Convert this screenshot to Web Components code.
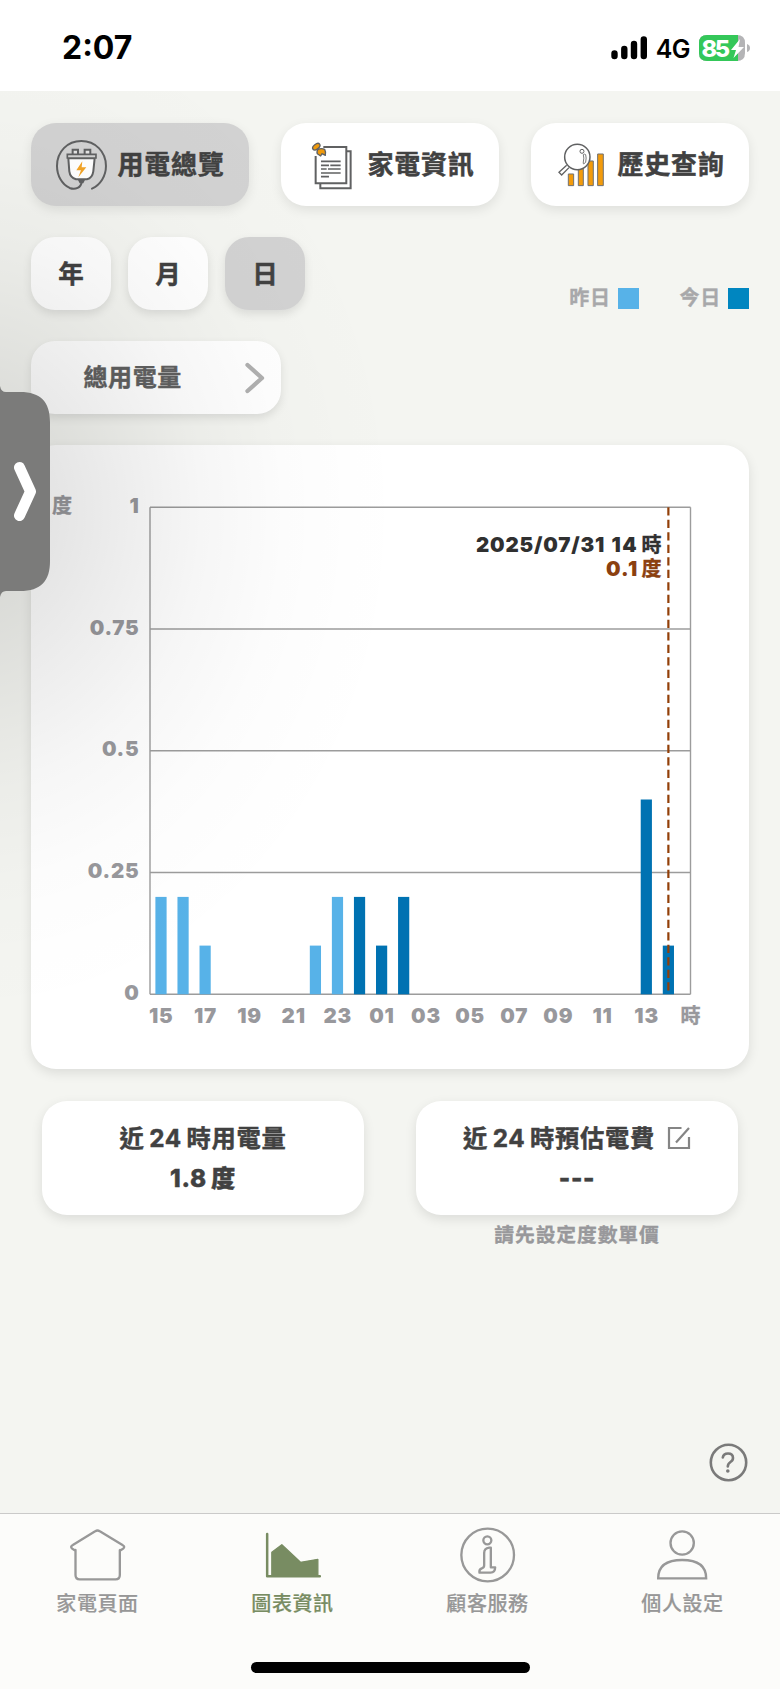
<!DOCTYPE html>
<html lang="zh-Hant">
<head>
<meta charset="utf-8">
<title>圖表資訊</title>
<style>
    html {
        background: #f4f5f1;
    }

    body {
        margin: 0;
        width: 780px;
        height: 1689px;
        overflow: hidden;
        font-family: Inter, "Noto Sans CJK TC", sans-serif;
        font-weight: 700;
        color: #414141;
    }
</style>
</head>
<body>
<energy-app></energy-app>

<script>
const ICONS = {
    plug: `<g fill="none" stroke="#606162" stroke-width="6">
        <path d="M216 235C241 224 258 197 258 167C258 124 226 92 184 92S111 124 111 167C111 196 126 222 149 233C166 240 184 232 185 214" stroke-linecap="round"/>
        <path d="M158 132V118H174V132M194 132V118H211V132" stroke-width="6" fill="#e4e4e4"/>
        <path d="M145 144H224L220 183Q217 203 201 207H168Q150 201 148 183Z" fill="#fff"/>
        <path d="M142 132H228V143H142Z" fill="#d2d2d2" stroke-width="5"/>
        </g><path d="M173 207H196L190 219H179Z" fill="#606162"/>
        <path d="M187 153L169 180H183L175 201L199 171H185Z" fill="#f3a427"/>`,
    paper: `<g fill="none" stroke="#606162" stroke-width="6">
        <path d="M230 123H242V234H151V220"/><path d="M160 110H229V219H137V137"/></g>
        <path d="M153 153H212M153 165H177M181 165H212M153 176H170M174 176H212M153 188H212M153 199H177" stroke="#606162" stroke-width="5" fill="none"/>
        <path d="M143 118Q153 112 164 117Q168 124 166 135L156 130L152 137L143 131Q139 127 143 118Z" fill="#f09a0b" stroke="#606162" stroke-width="4" stroke-linejoin="round"/>
        <ellipse cx="139" cy="109" rx="12.500" ry="7.500" transform="rotate(-38 139 109)" fill="#f09a0b" stroke="#606162" stroke-width="4"/>`,
    history: `<g fill="#f39b0b" stroke="#707070" stroke-width="3">
        <path d="M145 191H161V226H145ZM175 170H190V226H175ZM204 152H220V226H204ZM233 131H250V226H233Z"/></g>
        <path d="M140 165L117 186L125 194L147 172" fill="#fff" stroke="#606162" stroke-width="4"/>
        <circle cx="172" cy="140" r="38" fill="#fff" stroke="#606162" stroke-width="4.5"/>
        <circle cx="186" cy="123" r="6" fill="none" stroke="#606162" stroke-width="3"/>
        <path d="M190 133Q194 130 197 133Q200 142 197 156L191 161Q189 159 190 155Q193 143 190 133Z" fill="none" stroke="#606162" stroke-width="2.5"/>`,
    home: `<path d="M285 332Q292 327 299 332L367 373Q376 378 369 384Q360 391 359 388V463Q359 476 346 476H239Q226 476 226 463V388Q225 391 216 384Q209 378 218 373Z" fill="none" stroke="#989898" stroke-width="7" stroke-linejoin="round"/>`,
    chart: `<g transform="translate(-585 0)"><path d="M801 340V467H959" fill="none" stroke="#788c62" stroke-width="7.5" stroke-linecap="round" stroke-linejoin="round"/>
        <path d="M815 395L845 372L901 425L953 416V464H815Z" fill="#788c62" stroke="#788c62" stroke-width="4" stroke-linejoin="round"/></g>`,
    info: `<g fill="none" stroke="#989898" stroke-width="7" stroke-linejoin="round"><circle cx="292.500" cy="403" r="79"/>
        <circle cx="291.500" cy="359" r="12"/>
        <path d="M302 381H297Q282 383 282 397V434Q282 441 275 443Q266 446 268 456H301Q315 456 315 440H302Z"/></g>`,
    user: `<g transform="translate(-585 0)" fill="none" stroke="#989898" stroke-width="7"><circle cx="876" cy="367" r="35"/>
        <path d="M804 473Q804 418 876 418T948 473Z"/></g>`
};

class StatusBar extends HTMLElement {
    constructor() {
        super()
        this.attachShadow({ mode: 'open' }).innerHTML = `<style>
            :host {
                display: flex;
                align-items: center;
                justify-content: space-between;
                height: 91px;
                padding: 5px 30px 0 62px;
                box-sizing: border-box;
                background: #fff;
                color: #000;
            }
            .time { font-size: 32px; line-height: 40px; letter-spacing: 0; }
            .right { display: flex; align-items: center; }
            .net { font-size: 25px; font-weight: 600; margin: 1px 9px 0 8px; letter-spacing: -.6px; }
            svg { display: block; }
        </style>
        <span class="time">2:07</span>
        <div class="right">
            <svg width="37" height="24" viewBox="0 0 37 24"><path d="M3.500 17.500v2.500M13.300 13v7M23 8v12M32.800 3.500v16.500" stroke="#000" stroke-width="6.400" stroke-linecap="round"/></svg>
            <span class="net">4G</span>
            <svg width="51" height="26" viewBox="0 0 51 26">
                <path d="M8 0H38Q46 0 46 8V18Q46 26 38 26H8Q0 26 0 18V8Q0 0 8 0Z" fill="#b4b4b6"/>
                <path d="M39 0H8Q0 0 0 8V18Q0 26 8 26H39Z" fill="#34c759"/>
                <path d="M48 9Q51 10 51 13T48 17Z" fill="#b4b4b6"/>
                <text x="2.500" y="21.500" font-size="23.500" font-weight="800" fill="#fff" textLength="28.500">85</text>
                <path d="M41 4L32 15H37L34.500 23L45 12H39.500Z" fill="#fff"/>
            </svg>
        </div>`
    }
}
customElements.define('status-bar', StatusBar)

// big tab with an icon, used on top of the page
class TopTab extends HTMLElement {
    connectedCallback() {
        this.attachShadow({ mode: 'open' }).innerHTML = `<style>
            :host {
                display: flex;
                align-items: center;
                flex: 1;
                gap: 9.500px;
                padding-left: 23.800px;
                border-radius: 25px;
                background: #fff;
                box-shadow: 0 4px 12px rgba(0, 0, 0, .09);
                font-size: 26px;
                letter-spacing: .7px;
                -webkit-text-stroke: .45px;
                white-space: nowrap;
            }
            :host([active]) { background: #d2d2d2; }
            span { line-height: 36px; }
        </style>
        <svg width="53.300" height="53.300" viewBox="105 83 160 160">${ICONS[this.getAttribute('icon')]}</svg>
        <span><slot></slot></span>`
    }
}
customElements.define('top-tab', TopTab)

class PeriodButton extends HTMLElement {
    constructor() {
        super()
        this.attachShadow({ mode: 'open' }).innerHTML = `<style>
            :host {
                display: flex;
                align-items: center;
                justify-content: center;
                width: 80px;
                height: 73px;
                border-radius: 24px;
                background: #fff;
                box-shadow: 0 4px 10px rgba(0, 0, 0, .1);
                font-size: 25.500px;
                -webkit-text-stroke: .45px;
                line-height: 36px;
            }
            :host([active]) { background: #d2d2d2; }
        </style><slot></slot>`
    }
}
customElements.define('period-button', PeriodButton)

class LegendItem extends HTMLElement {
    connectedCallback() {
        this.attachShadow({ mode: 'open' }).innerHTML = `<style>
            :host {
                display: flex;
                align-items: center;
                gap: 7px;
                color: #a8a8aa;
                font-size: 20px;
                letter-spacing: .7px;
                -webkit-text-stroke: .35px;
                line-height: 23px;
            }
            span { padding-top: 1px; }
            i { width: 21px; height: 21px; background: ${this.getAttribute('color')}; }
        </style><span><slot></slot></span><i></i>`
    }
}
customElements.define('legend-item', LegendItem)

class SelectButton extends HTMLElement {
    constructor() {
        super()
        this.attachShadow({ mode: 'open' }).innerHTML = `<style>
            :host {
                display: flex;
                align-items: center;
                justify-content: space-between;
                width: 250px;
                height: 73px;
                padding: 0 16px 0 52.500px;
                box-sizing: border-box;
                border-radius: 24px;
                background: #fff;
                box-shadow: 0 4px 10px rgba(0, 0, 0, .1);
                color: #606060;
                font-size: 24px;
                letter-spacing: .6px;
                -webkit-text-stroke: .4px;
                line-height: 34px;
            }
        </style>
        <slot></slot>
        <svg width="20" height="32" viewBox="0 0 20 32"><path d="M2.500 3L17 16L2.500 29" fill="none" stroke="#b0b0b0" stroke-width="4.300" stroke-linecap="round" stroke-linejoin="round"/></svg>`
    }
}
customElements.define('select-button', SelectButton)

class UsageChart extends HTMLElement {

    constructor() {
        super()
        this.attachShadow({ mode: 'open' })
        this.hours = ['15', '17', '19', '21', '23', '01', '03', '05', '07', '09', '11', '13']
        // slot 0 is 15:00 yesterday, slot 9 is midnight
        this.values = { 0: .2, 1: .2, 2: .1, 7: .1, 8: .2, 9: .2, 10: .1, 11: .2, 22: .4, 23: .1 }
    }

    connectedCallback() {
        const left = 119, right = 659.500, top = 62.300, bottom = 549.300
        const h = bottom - top
        const x = i => 130 + i * 22.060

        const grid = [0, .25, .5, .75, 1].map(v => {
            const y = bottom - v * h
            return `<path d="M${left} ${y}H${right}"/>`
        }).join('')

        const labels = [0, .25, .5, .75, 1]
            .map(v => `<text x="108.500" y="${bottom - v * h + 5.500}" text-anchor="end">${v}</text>`)
            .join('')

        const bars = Object.entries(this.values).map(([i, v]) =>
            `<rect x="${x(i) - 5.600}" y="${bottom - v * h}" width="11.200" height="${v * h}" fill="${i < 9 ? '#57b2e8' : '#0072b2'}"/>`
        ).join('')

        const hours = this.hours
            .map((t, i) => `<text x="${x(i * 2) + .300}" y="577.800" text-anchor="middle">${t}</text>`)
            .join('')

        this.shadowRoot.innerHTML = `<style>
            :host {
                display: block;
                height: 624px;
                border-radius: 25px;
                background: #fff;
                box-shadow: 0 4px 12px rgba(0, 0, 0, .1);
            }
            svg { display: block; }
            text { font-size: 20.500px; font-weight: 900; letter-spacing: .8px; }
            .cjk { font-size: 20px; font-weight: 700; letter-spacing: 0; -webkit-text-stroke: .35px; }
            .axis { fill: #98989c; color: #98989c; }
            .date { fill: #303030; color: #303030; }
            .value { fill: #8b4010; color: #8b4010; }
            .axis .cjk, .date .cjk, .value .cjk { stroke: currentColor; stroke-width: .35px; }
        </style>
        <svg width="718" height="624" viewBox="0 0 718 624">
            <g stroke="#9c9c9c" stroke-width="1.400" fill="none">${grid}<path d="M${left} ${top}V${bottom}M${right} ${top}V${bottom}"/></g>
            ${bars}
            <path d="M${x(23)} ${top}V${bottom}" stroke="#923f08" stroke-width="2.200" stroke-dasharray="8.300 4.200"/>
            <g class="axis">${labels}${hours}
                <text class="cjk" x="21" y="68">度</text>
                <text class="cjk" x="649.500" y="578">時</text>
            </g>
            <g class="date">
                <text x="445" y="106.500" textLength="129">2025/07/31</text>
                <text x="580.500" y="106.500" textLength="26">14</text>
                <text class="cjk" x="610.500" y="106.500">時</text>
            </g>
            <g class="value">
                <text x="575" y="131" textLength="32">0.1</text>
                <text class="cjk" x="610.500" y="131">度</text>
            </g>
        </svg>`
    }

}
customElements.define('usage-chart', UsageChart)

class SummaryCard extends HTMLElement {
    constructor() {
        super()
        this.attachShadow({ mode: 'open' }).innerHTML = `<style>
            :host { display: block; width: 322px; text-align: center; }
            .card {
                height: 114px;
                padding-top: 17px;
                box-sizing: border-box;
                border-radius: 25px;
                background: #fff;
                box-shadow: 0 4px 12px rgba(0, 0, 0, .1);
                font-size: 24.300px;
                line-height: 40.500px;
                letter-spacing: .7px;
                -webkit-text-stroke: .45px;
            }
            .title { display: flex; justify-content: center; align-items: center; gap: 12px; }
            .value { font-weight: 800; }
            ::slotted([slot=note]) { display: block; font-size: 19.800px; line-height: 40px; letter-spacing: .9px; color: #98989b; -webkit-text-stroke: .35px; }
        </style>
        <div class="card">
            <div class="title"><span><slot name="title"></slot></span><slot name="icon"></slot></div>
            <div class="value"><slot></slot></div>
        </div>
        <slot name="note"></slot>`
    }
}
customElements.define('summary-card', SummaryCard)

class NavItem extends HTMLElement {
    connectedCallback() {
        this.attachShadow({ mode: 'open' }).innerHTML = `<style>
            :host {
                display: flex;
                flex-direction: column;
                align-items: center;
                flex: 1;
                color: #979797;
                font-size: 20px;
                font-weight: 500;
                line-height: 30px;
                letter-spacing: .6px;
                -webkit-text-stroke: .2px;
            }
            :host([active]) { color: #788c62; }
            svg { display: block; margin: 11px 0 4px; }
        </style>
        <svg width="60" height="60" viewBox="203.500 313 180 180">${ICONS[this.getAttribute('icon')]}</svg>
        <span><slot></slot></span>`
    }
}
customElements.define('nav-item', NavItem)

class BottomNav extends HTMLElement {
    constructor() {
        super()
        this.attachShadow({ mode: 'open' }).innerHTML = `<style>
            :host {
                display: flex;
                flex-direction: column;
                align-items: center;
                justify-content: space-between;
                height: 176px;
                padding-bottom: 16px;
                box-sizing: border-box;
                border-top: 1px solid #cacac9;
                background: #fcfcfa;
            }
            nav { display: flex; width: 100%; }
            .indicator { width: 279px; height: 11px; border-radius: 6px; background: #000; }
        </style>
        <nav><slot></slot></nav>
        <div class="indicator"></div>`
    }
}
customElements.define('bottom-nav', BottomNav)

// side handle, lies over the page together with its wide soft shadow
class DrawerHandle extends HTMLElement {
    constructor() {
        super()
        this.attachShadow({ mode: 'open' }).innerHTML = `<style>
            :host { position: absolute; left: 0; top: 91px; width: 460px; height: 960px; pointer-events: none; overflow: hidden; }
            .haze {
                position: absolute;
                inset: 0;
                background: radial-gradient(ellipse 440px 520px at -30px 420px, rgba(0,0,0,.125), rgba(0,0,0,.107) 18%, rgba(0,0,0,.072) 35%, rgba(0,0,0,.035) 53%, rgba(0,0,0,.013) 72%, rgba(0,0,0,.004) 88%, transparent);
            }
            svg { position: absolute; left: 0; top: 293px; }
        </style>
        <div class="haze"></div>
        <svg width="52" height="216" viewBox="0 384 52 216">
            <path d="M0 386Q1 392 6 392H20C41 392 50 402 50 422V561C50 581 41 591 20 591H6Q1 591 0 597Z" fill="#7b7b7a"/>
            <path d="M19.500 467.500L30.500 491.500L19.500 515.500" fill="none" stroke="#fff" stroke-width="11" stroke-linecap="round" stroke-linejoin="round"/>
        </svg>`
    }
}
customElements.define('drawer-handle', DrawerHandle)

class EnergyApp extends HTMLElement {
    constructor() {
        super()
        this.attachShadow({ mode: 'open' }).innerHTML = `<style>
            :host { display: flex; flex-direction: column; height: 1689px; position: relative; background: #f4f5f1; }
            main { flex: 1; padding: 32px 31px 0; display: flex; flex-direction: column; }
            .tabs { display: flex; gap: 32px; height: 83px; }
            .filters { display: flex; justify-content: space-between; align-items: flex-end; margin: 31px 0; }
            .periods { display: flex; gap: 17px; }
            .legend { display: flex; gap: 41px; }
            usage-chart { margin-top: 31px; }
            .summary { display: flex; justify-content: space-between; margin: 31.500px 11px 0; }
            .help { align-self: flex-end; margin: auto 1px 31px 0; }
        </style>
        <status-bar></status-bar>
        <main>
            <div class="tabs">
                <top-tab icon="plug" active>用電總覽</top-tab>
                <top-tab icon="paper">家電資訊</top-tab>
                <top-tab icon="history">歷史查詢</top-tab>
            </div>
            <div class="filters">
                <div class="periods">
                    <period-button>年</period-button>
                    <period-button>月</period-button>
                    <period-button active>日</period-button>
                </div>
                <div class="legend">
                    <legend-item color="#57b2e8">昨日</legend-item>
                    <legend-item color="#0086c0">今日</legend-item>
                </div>
            </div>
            <select-button>總用電量</select-button>
            <usage-chart></usage-chart>
            <div class="summary">
                <summary-card><span slot="title">近&#8201;24&#8201;時用電量</span>1.8&#8201;度</summary-card>
                <summary-card>
                    <span slot="title">近&#8201;24&#8201;時預估電費</span>
                    <svg slot="icon" width="24" height="24" viewBox="0 0 24 24" fill="none" stroke="#858585" stroke-width="2.200"><path d="M14.500 2H2V22H22V11M9 16.500L22 2"/></svg>
                    ---
                    <span slot="note">請先設定度數單價</span>
                </summary-card>
            </div>
            <svg class="help" width="39" height="39" viewBox="0 0 39 39" fill="none" stroke="#7a7a7a" stroke-width="2.600" stroke-linecap="round">
                <circle cx="19.500" cy="19.500" r="17.700"/>
                <path d="M13.800 14.500Q14.500 10.500 19 10.500Q24 10.500 24 15Q24 17.500 21.500 19Q18.800 20.800 18.800 23.500"/>
                <circle cx="18.800" cy="28" r="1.800" fill="#7a7a7a" stroke="none"/>
            </svg>
        </main>
        <bottom-nav>
            <nav-item icon="home">家電頁面</nav-item>
            <nav-item icon="chart" active>圖表資訊</nav-item>
            <nav-item icon="info">顧客服務</nav-item>
            <nav-item icon="user">個人設定</nav-item>
        </bottom-nav>
        <drawer-handle></drawer-handle>`
    }
}
customElements.define('energy-app', EnergyApp)
</script>
</body>
</html>
